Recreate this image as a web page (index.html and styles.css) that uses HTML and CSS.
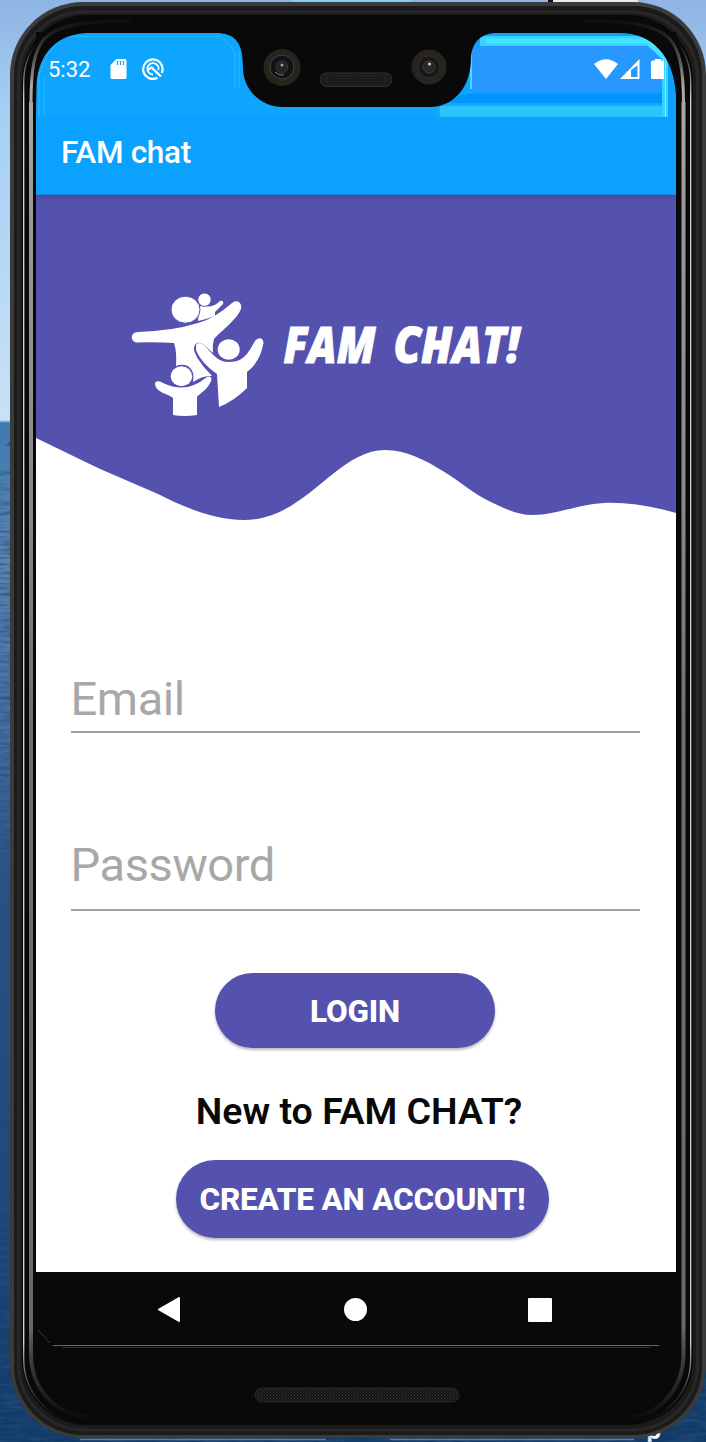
FILE: index.html
```html
<!DOCTYPE html>
<html lang="en">
<head>
<meta charset="utf-8">
<title>FAM chat</title>
<link rel="stylesheet" href="styles.css">
</head>
<body>
<div class="desktop">
  <span class="desktop-label">p</span>
  <svg class="layer" viewBox="0 0 706 1442" aria-hidden="true">
    <defs>
      <linearGradient id="edge" x1="0" y1="0" x2="0" y2="1442" gradientUnits="userSpaceOnUse">
        <stop offset="0" stop-color="#fff" stop-opacity="0"/><stop offset=".03" stop-color="#ddd" stop-opacity="0"/>
        <stop offset=".07" stop-color="#ddd"/><stop offset=".93" stop-color="#ddd"/>
        <stop offset=".97" stop-color="#777" stop-opacity=".3"/><stop offset=".985" stop-color="#777" stop-opacity="0"/>
      </linearGradient>
      <linearGradient id="chrome" x1="0" y1="15" x2="0" y2="1425" gradientUnits="userSpaceOnUse">
        <stop offset="0" stop-color="#333" stop-opacity="0"/><stop offset=".006" stop-color="#444" stop-opacity=".2"/><stop offset=".05" stop-color="#aaa"/>
        <stop offset=".14" stop-color="#999"/><stop offset=".35" stop-color="#888"/><stop offset=".5" stop-color="#6f6f6f"/>
        <stop offset=".93" stop-color="#686870"/><stop offset=".98" stop-color="#333" stop-opacity=".5"/><stop offset="1" stop-color="#222" stop-opacity="0"/>
      </linearGradient>
      <filter id="ripple" x="0" y="0" width="1" height="1"><feTurbulence type="fractalNoise" baseFrequency=".04 .3" numOctaves="3" seed="4"/><feColorMatrix values="0 0 0 0 .02  0 0 0 0 .08  0 0 0 0 .2  2.400 0 0 0 -.95"/></filter>
      <pattern id="mesh" width="3" height="3" patternUnits="userSpaceOnUse">
        <rect width="3" height="3" fill="#141414"/><path d="M0 .5h1M1.500 2h1" stroke="#3c3c3c"/>
      </pattern>
    </defs>
    <path d="M0 470h706v972H0z" filter="url(#ripple)" opacity=".7"/>
    <path d="M292 0h119v3H292z" fill="#83cff6"/><path d="M548 0h5v3h-5z" fill="#111"/><path d="M553 0h85v3h-85z" fill="#e8eaee"/>
    <path d="M6 446l4-5v5z" fill="#44566a"/>
    <path d="M80 1439.500h246M390 1439.500h244" stroke="#777" stroke-width="1.500"/>
    <rect x="10" y="2" width="696" height="1436" rx="73" fill="#3b3b3b"/>
    <rect x="14" y="6" width="688" height="1429" rx="69" fill="#1b1b1b"/>
    <rect x="18.500" y="12" width="679" height="1418" rx="66" fill="none" stroke="#282828" stroke-width="3"/>
    <rect x="22" y="15" width="671" height="1410" rx="65" fill="#090909"/>
    <rect x="23.700" y="17" width="667" height="1407" rx="65" fill="none" stroke="url(#edge)" stroke-width="1.300"/>
    <path d="M31 102V1354C31 1390 57 1416 90 1417M683.500 102V1354C683.500 1390 657 1416 630 1417" fill="none" stroke="url(#chrome)" stroke-width="4"/>
    <rect x="255" y="1388" width="204" height="14" rx="7" fill="url(#mesh)" stroke="#262626"/>
  </svg>

  <main class="screen">
    <header class="status">
      <svg class="status-art" viewBox="36 33 640 84" aria-hidden="true">
        <path d="M39 117V75l8-20 14-17M44 117V76M235 89V52L223 37M239 89V50M66 36.500h155" fill="none" stroke="#2bb7ff"/>
        <path d="M472 33h204v84H499V76H472z" fill="#0ca3ff"/>
        <path d="M480 36h167l21 24v57h-6V58l-15-12H480z" fill="#35d2ff"/><path d="M486 41h162l17 18" fill="none" stroke="#44e4ff" stroke-width="5"/>
        <path d="M472 46h175l15 13v33H472z" fill="#2698ff"/>
        <path d="M472 91h190v3H472z" fill="#139bff"/><path d="M462 94h200v9H450z" fill="#0095ff"/>
        <path d="M438 103h224v3H438z" fill="#12aaff"/><path d="M436 106h226v11H436z" fill="#2dc3ff"/>
        <path d="M436 106h4v11h-4z" fill="#12aaff"/>
        <path d="M471 50v39" stroke="#62e8ff" stroke-width="1.500"/>
        <path d="M665.500 58v59" stroke="#b6cfff"/>
      </svg>
      <span class="clock">5:32</span>
      <svg class="ico sd" viewBox="0 0 16 20"><path d="M6 0h8.500Q16 0 16 1.500v17Q16 20 14.500 20h-13Q0 20 0 18.500V6z" fill="#fff"/><path d="M7 2v4M10 2v4M13 2v4" stroke="#0ca3ff" stroke-width="1.200"/></svg>
      <svg class="ico app" viewBox="0 0 22 22" fill="none" stroke="#fff"><path d="M15.500 19.700A9.700 9.700 0 1 1 19.800 15" stroke-width="2.200"/><path d="M11 16.500A5.700 5.700 0 1 1 16.600 12" stroke-width="1.800"/><path d="M5.500 12 9.500 9.500l9.500 9" stroke-width="2.300"/></svg>
      <span class="spacer"></span>
      <svg class="ico signals" viewBox="0 0 70 21" fill="#fff"><path d="M0 5Q12-4.500 24 5L12 20z"/><path fill-rule="evenodd" d="M26 20 45.500 0v20zM37 18h6.500V6.500L37 11z"/><path d="M57 3q0-1.500 1.500-1.500H61V0h6v1.500h3V20H58.500Q57 20 57 18.500z"/></svg>
    </header>
    <div class="appbar"><span class="title">FAM chat</span></div>
    <section class="hero">
      <svg class="hero-art" viewBox="36 195 640 330">
        <defs><linearGradient id="shade" x1="0" y1="0" x2="0" y2="1"><stop offset="0" stop-color="#4c479b"/><stop offset="1" stop-color="#5551af"/></linearGradient></defs>
        <path d="M36 195H676V513Q638 502 607 502.700C578 504 556 515 532 515C517 515 503 508 485 499C469 490 458 480 444 471.700C425 460 406 450 385 450C336 450 306 520 244 520C213 520 184 507 158 494L99 468.500 36 438z" fill="#5551af"/>
        <path d="M36 195h640v5H36z" fill="url(#shade)"/>
        <g fill="#fff">
          <path d="M198 321L199.500 307Q203 304 206 306Q213 308 220 301Q224 300 223 304L215 312V316Q207 319 198 321z"/>
          <circle cx="204.500" cy="299.700" r="6.700" stroke="#5551af" stroke-width="1"/>
          <ellipse cx="185.500" cy="309.700" rx="14.500" ry="13.500" stroke="#5551af" stroke-width="1"/>
          <path d="M138 332Q172 331 198 323Q214 319 232 303C238 298 244 305 240 311C236 320 219 333 214 339Q212 346 213 353L203 344C196 340 192 347 195 353C199 363 208 371 212 376Q203 375 193 382C196 368 186 362 176 366Q177 352 174 343Q158 342 136 342.500C130 341 130 332 138 332z"/>
          <ellipse cx="228.700" cy="349.500" rx="11" ry="10.300"/>
          <path d="M196 345Q200 340 206 347C214 356 219 362 229 362C245 362 249 351 255 341C260 335 265 340 263 345C260 360 253 367 247 372V388Q234 401 219 407L217 374C207 367 199 358 196 350z"/>
          <ellipse cx="181.500" cy="376.300" rx="10.700" ry="10"/>
          <path d="M155 384C155 380 160 381 163 383Q180 391 194 385Q201 382 207 377C211 375 213 379 210 383C207 390 199 394 197 397V415Q184 417 173 415V398Q171 396 163 393Q155 389 155 384z"/>
        </g>
        <g class="wordmark"><text x="283.500" y="363" textLength="92" lengthAdjust="spacingAndGlyphs">FAM</text><text x="393.500" y="363" textLength="126" lengthAdjust="spacingAndGlyphs">CHAT!</text></g>
      </svg>
    </section>
    <section class="form">
      <div class="field email"><span>Email</span></div>
      <div class="field password"><span>Password</span></div>
      <button class="btn login"><span>LOGIN</span></button>
      <p class="prompt"><span>New to FAM CHAT?</span></p>
      <button class="btn create"><span>CREATE AN ACCOUNT!</span></button>
    </section>
    <nav class="navbar">
      <svg viewBox="36 1272 640 73"><g fill="#fff" stroke="#fff" stroke-linejoin="round" stroke-width="2"><path d="M159 1309.500 179 1298v23z"/><circle cx="355.500" cy="1309.500" r="10.500"/><path d="M529 1299h22v22h-22z"/></g></svg>
    </nav>
  </main>

  <svg class="layer" viewBox="0 0 706 1442" aria-hidden="true">
    <path fill="#090909" fill-rule="evenodd" d="M36 32H676V95C674 57 653 33 620 33H497C480 33 472 43 471 58C471 88 453 107 430 107H283C260 107 243 89 243 68C243 43 236 33 215 33H89C57 33 38 54 36.500 85L36 115z"/>
    <path d="M130 21C85 20 58 25 45 38 34 50 31 70 31 103M584 21C629 20 656 25 669 38 680 50 683.500 70 683.500 103" fill="none" stroke="url(#chrome)" stroke-width="3"/>
    <g><circle cx="282" cy="67.500" r="18.500" fill="#29231e"/><circle cx="282" cy="67" r="12" fill="#111316" stroke="#45433f"/><circle cx="282" cy="67" r="6" fill="#242329" stroke="#38383c"/><circle cx="282" cy="65" r="1.500" fill="#c5947c"/><path d="M275 72q4 4 9 3" stroke="#777b86" fill="none"/></g>
    <g><circle cx="429" cy="67" r="17.500" fill="#29231e"/><circle cx="429" cy="67" r="11" fill="#17181a" stroke="#34322f"/><circle cx="429" cy="67" r="6" fill="#26262b" stroke="#3c3b3d"/><circle cx="429.500" cy="64" r="1.600" fill="#d8c3b8"/></g>
    <rect x="320" y="73" width="72" height="13.500" rx="6.700" fill="url(#mesh)" stroke="#303030"/>
    <path d="M53 1345.500H659" stroke="#666"/><path d="M62 1347.500H651" stroke="#303030"/><path d="M38 1330l12 13" stroke="#393939"/>
  </svg>
</div>
</body>
</html>
```
FILE: styles.css
```css
body { margin: 0; font-family: Roboto, "Liberation Sans", sans-serif; }
.desktop {
  position: relative; box-sizing: border-box; width: 706px; height: 1442px; padding: 33px 30px 0 36px; overflow: hidden;
  background: linear-gradient(#8eb5e3 0, #a5cff5 110px, #c9e1f5 420px, #3f7bb0 423px, #5a84b0 560px, #4a74a6 690px, #2b5288 880px, #1c4878 1200px, #113a66 1442px);
}
.desktop-label { position: absolute; left: 646px; top: 1415px; z-index: 0; font: 700 24px/30px "Open Sans", sans-serif; color: #fff; }
.layer { position: absolute; left: 0; top: 0; width: 706px; height: 1442px; }
.screen { position: relative; display: flex; flex-direction: column; width: 640px; height: 1312px; background: #fff; }
.status { position: relative; display: flex; height: 84px; box-sizing: border-box; padding: 0 12px 10px 12px; align-items: center; background: #0ea5ff; color: #fff; }
.status-art { position: absolute; inset: 0; width: 640px; height: 84px; }
.clock { position: relative; width: 62px; font-size: 22px; line-height: 26px; }
.ico { position: relative; flex: none; top: -1px; }
.sd { width: 17px; height: 20px; }
.app { width: 22px; height: 22px; margin-left: 15px; }
.spacer { flex: 1; }
.signals { width: 70px; height: 21px; }
.appbar { display: flex; align-items: center; height: 78px; box-sizing: border-box; padding: 0 25px 5px; background: #0ba1ff; border-bottom: 1px solid #168ae0; color: #fff; }
.title { font-size: 31.500px; font-weight: 500; line-height: 38px; letter-spacing: -.3px; }
.hero { height: 330px; }
.hero-art { display: block; width: 640px; height: 330px; }
.wordmark { fill: #fff; stroke: #fff; stroke-width: 1px; font: italic 800 50px "Open Sans", sans-serif; }
.form { display: flex; flex-direction: column; align-items: center; height: 747px; }
.field { width: 569px; box-sizing: border-box; margin-right: 2px; border-bottom: 2px solid #a0a0a0; color: #a8a8a8; font-size: 47px; line-height: 58px; letter-spacing: -.4px; }
.email { height: 63px; margin-top: 145px; }
.password { height: 75px; margin-top: 103px; }
.btn { display: flex; align-items: center; justify-content: center; box-sizing: border-box; padding: 2px 0 0; border: 0; border-radius: 40px; background: #5551af; color: #fff; font: 800 31.500px/38px Roboto, sans-serif; letter-spacing: -.2px; box-shadow: 0 2px 3px rgba(0,0,0,.28); white-space: nowrap; }
.login { width: 280px; height: 75px; margin: 62px 2px 0 0; }
.prompt { margin: 41px 0 0 6px; font-size: 37.500px; line-height: 44px; font-weight: 600; color: #090909; white-space: nowrap; }
.create { width: 373px; height: 78px; margin: 27px 0 0 13px; }
.navbar { height: 73px; flex: none; background: #090909; }
.navbar svg { display: block; width: 640px; height: 73px; }
```
